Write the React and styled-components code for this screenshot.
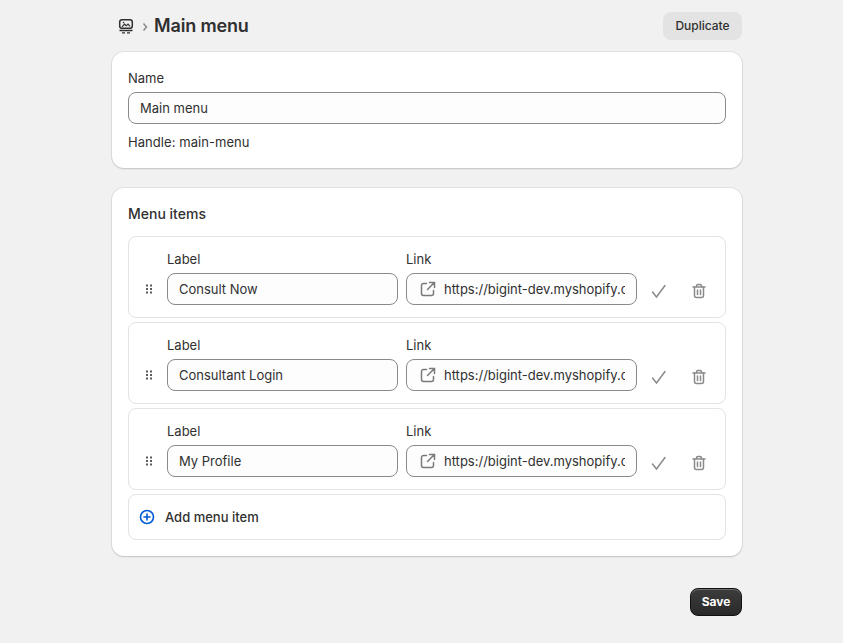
import React from 'react';
import styled, { createGlobalStyle } from 'styled-components';

const GlobalStyle = createGlobalStyle`
  html, body {
    margin: 0;
    padding: 0;
    background: #f1f1f1;
    font-family: Inter, "Liberation Sans", sans-serif;
    font-size: 13px;
    color: #303030;
  }
`;

const Page = styled.div`
  width: 630px;
  height: 643px;
  margin-left: 112px;
  padding-top: 12px;
  box-sizing: border-box;
  display: flex;
  flex-direction: column;
`;

const Header = styled.header`
  height: 28px;
  margin-bottom: 12px;
  display: flex;
  align-items: center;
  justify-content: space-between;
`;

const Crumbs = styled.div`
  display: flex;
  align-items: center;
  padding-left: 5px;
`;

const Chevron = styled.svg`
  width: 16px;
  height: 16px;
  margin: 1px 1px 0 2px;
  color: #8a8a8a;
`;

const Title = styled.h1`
  margin: 0;
  font-size: 18px;
  line-height: 28px;
  font-weight: 600;
  letter-spacing: -0.15px;
  color: #303030;
`;

const Duplicate = styled.button`
  width: 79px;
  height: 28px;
  padding: 0 0 2px;
  border: 0;
  border-radius: 8px;
  background: #e3e3e3;
  color: #303030;
  font: 500 12px Inter, sans-serif;
`;

const Card = styled.section`
  background: #fff;
  border-radius: 12px;
  box-shadow: 0 0 0 1px rgba(0, 0, 0, 0.06), 0 1px 2px rgba(0, 0, 0, 0.14);
  padding: 16px;
  margin-bottom: 20px;
  box-sizing: border-box;
`;

const NameCard = styled(Card)`
  height: 116px;
  padding-top: 18px;
`;

const ItemsCard = styled(Card)`
  height: 368px;
`;

const FieldLabel = styled.div`
  font-size: 13px;
  line-height: 16px;
  height: 16px;
  color: #303030;
`;

const InputBox = styled.div`
  height: 32px;
  box-sizing: border-box;
  border: 1px solid #8a8a8a;
  border-radius: 8px;
  background: #fdfdfd;
  display: flex;
  align-items: center;
  padding: 0 ${p => p.$right}px 0 11px;
  margin-top: ${p => p.$gap}px;
  overflow: hidden;
  font-size: 13px;
  color: #303030;
`;

const Handle = styled.div`
  margin-top: 10px;
  line-height: 16px;
  letter-spacing: 0.06px;
  color: #303030;
`;

const SectionTitle = styled.h2`
  margin: 2px 0 14px;
  font-size: 14px;
  line-height: 16px;
  font-weight: 550;
  color: #303030;
`;

const ItemList = styled.div`
  display: flex;
  flex-direction: column;
  gap: 4px;
`;

const ItemRow = styled.div`
  height: 82px;
  box-sizing: border-box;
  border: 1px solid #e3e3e3;
  border-radius: 8px;
  background: #fff;
  display: grid;
  grid-template-columns: 38px 231px 239px 40px 40px;
  padding-top: 14px;
`;

const Grip = styled.svg`
  width: 8px;
  height: 10px;
  margin: 33px 0 0 16px;
  color: #5a5a5a;
`;

const Field = styled.div`
  margin-left: ${p => p.$left}px;
  width: 231px;
`;

const LinkIcon = styled.svg`
  flex: none;
  width: 16px;
  height: 16px;
  margin-right: 8px;
  margin-left: 2px;
  color: #7a7a7a;
`;

const ClippedUrl = styled.span`
  white-space: nowrap;
  overflow: hidden;
  flex: 1;
`;

const ActionIcon = styled.svg`
  width: 16px;
  height: 16px;
  margin: 32px 0 0 ${p => p.$left}px;
  color: #8a8a8a;
`;

const AddRow = styled.div`
  height: 46px;
  box-sizing: border-box;
  border: 1px solid #e3e3e3;
  border-radius: 8px;
  display: flex;
  align-items: center;
  padding-left: 10px;
  gap: 10px;
  font-weight: 550;
  color: #303030;
`;

const PlusIcon = styled.svg`
  width: 16px;
  height: 16px;
  color: #005bd3;
`;

const Footer = styled.div`
  display: flex;
  justify-content: flex-end;
  margin-top: 12px;
`;

const Save = styled.button`
  width: 52px;
  height: 28px;
  padding: 0 0 2px;
  border: 1px solid #111;
  border-radius: 8px;
  background: linear-gradient(180deg, #3c3c3c, #2a2a2a);
  box-shadow: inset 0 1px 0 rgba(255, 255, 255, 0.25);
  color: #fff;
  font: 650 12px Inter, sans-serif;
`;

const items = ['Consult Now', 'Consultant Login', 'My Profile'];

const App = () => (
  <>
    <GlobalStyle />
    <Page>
      <Header>
        <Crumbs>
          <svg width="18" height="18" viewBox="0 0 18 18" fill="none" stroke="#303030" strokeWidth="1.5">
            <rect x="2.700" y="2.700" width="12.600" height="8.600" rx="2.400" />
            <path d="M5 9.800l2.500-2.600 1.800 1.600 1.700-1.700 2 2.200" strokeWidth="1.200" />
            <circle cx="6.500" cy="5.500" r=".8" fill="#303030" stroke="none" />
            <path d="M2.500 13.500h13M5 15.800h3M10 15.800h3" strokeWidth="1.300" />
          </svg>
          <Chevron viewBox="0 0 16 16" fill="none" stroke="currentColor" strokeWidth="1.500">
            <path d="M6.500 4.500l3 3.500-3 3.500" />
          </Chevron>
          <Title>Main menu</Title>
        </Crumbs>
        <Duplicate>Duplicate</Duplicate>
      </Header>

      <NameCard>
        <FieldLabel>Name</FieldLabel>
        <InputBox $gap={6} $right={11}>Main menu</InputBox>
        <Handle>Handle: main-menu</Handle>
      </NameCard>

      <ItemsCard>
        <SectionTitle>Menu items</SectionTitle>
        <ItemList>
          {items.map(label => (
            <ItemRow key={label}>
              <Grip viewBox="0 0 8 10" fill="currentColor">
                <rect x="1" y="0.500" width="2" height="2" />
                <rect x="5" y="0.500" width="2" height="2" />
                <rect x="1" y="4" width="2" height="2" />
                <rect x="5" y="4" width="2" height="2" />
                <rect x="1" y="7.500" width="2" height="2" />
                <rect x="5" y="7.500" width="2" height="2" />
              </Grip>
              <Field $left={0}>
                <FieldLabel>Label</FieldLabel>
                <InputBox $gap={6} $right={11}>{label}</InputBox>
              </Field>
              <Field $left={8}>
                <FieldLabel>Link</FieldLabel>
                <InputBox $gap={6} $right={11}>
                  <LinkIcon viewBox="0 0 16 16" fill="none" stroke="currentColor" strokeWidth="1.500" strokeLinecap="round">
                    <path d="M6.500 2.500H3.500A2 2 0 0 0 1.500 4.500v8a2 2 0 0 0 2 2h8a2 2 0 0 0 2-2V9.500" />
                    <path d="M9.500 1.500h5v5M14.200 1.800L7.500 8.500" />
                  </LinkIcon>
                  <ClippedUrl>https://bigint-dev.myshopify.com/pages/consult</ClippedUrl>
                </InputBox>
              </Field>
              <ActionIcon $left={14} viewBox="0 0 16 16" fill="none" stroke="currentColor" strokeWidth="1.500" strokeLinecap="round">
                <path d="M1.500 9l4 5 8.500-11.500" />
              </ActionIcon>
              <ActionIcon $left={14} viewBox="0 0 16 16" fill="none" stroke="currentColor" strokeWidth="1.500" strokeLinecap="round">
                <path d="M2 4h12M5.500 4V3a1.500 1.500 0 0 1 1.500-1.500h2A1.500 1.500 0 0 1 10.500 3v1" />
                <path d="M3.500 4v8.500a2 2 0 0 0 2 2h5a2 2 0 0 0 2-2V4M6.500 7v4.500M9.500 7v4.500" />
              </ActionIcon>
            </ItemRow>
          ))}
          <AddRow>
            <PlusIcon viewBox="0 0 16 16" fill="none" stroke="currentColor" strokeWidth="1.600" strokeLinecap="round">
              <circle cx="8" cy="8" r="6.500" />
              <path d="M8 5v6M5 8h6" />
            </PlusIcon>
            Add menu item
          </AddRow>
        </ItemList>
      </ItemsCard>

      <Footer>
        <Save>Save</Save>
      </Footer>
    </Page>
  </>
);

export default App;
